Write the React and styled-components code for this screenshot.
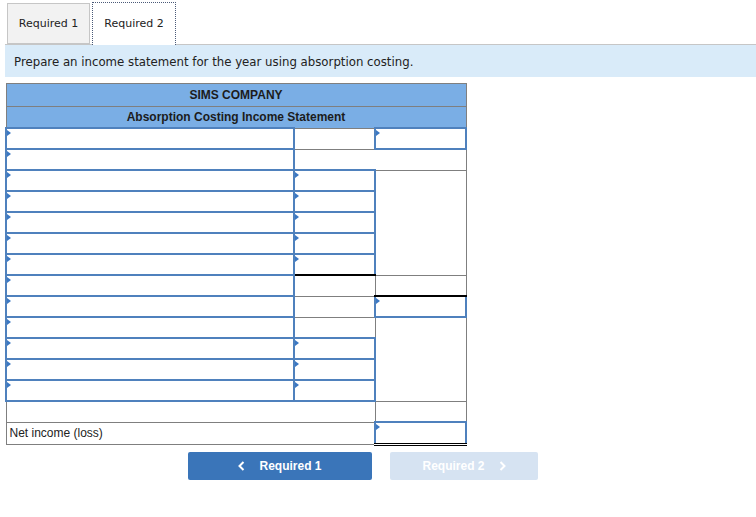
import React from 'react';
import styled, { createGlobalStyle } from 'styled-components';

const GlobalStyle = createGlobalStyle`
  html, body {
    margin: 0;
    padding: 0;
    background: #fff;
  }
  body {
    font-family: "DejaVu Sans", Verdana, sans-serif;
  }
`;

const Page = styled.div`
  padding: 3px 0 0 5px;
  width: 751px;
`;

const TabBar = styled.div`
  display: flex;
  align-items: flex-end;
  gap: 2px;
  padding-left: 2px;
  border-bottom: 1px solid #c6c6c6;
  height: 41px;
`;

const Tab = styled.button`
  box-sizing: border-box;
  font-family: "DejaVu Sans", Verdana, sans-serif;
  font-size: 11px;
  color: #222;
  cursor: pointer;
  width: ${({ $active }) => ($active ? '84px' : '83px')};
  height: ${({ $active }) => ($active ? '43px' : '41px')};
  margin-bottom: ${({ $active }) => ($active ? '-1px' : '0')};
  background: ${({ $active }) => ($active ? '#fff' : '#f2f2f2')};
  border: 1px ${({ $active }) => ($active ? 'dotted #4a5a78' : 'solid #c6c6c6')};
  border-bottom: ${({ $active }) => ($active ? 'none' : '1px solid #c6c6c6')};
  padding: ${({ $active }) => ($active ? '0 0 2px' : '0')};
`;

const Instruction = styled.div`
  background: #d9ebf9;
  height: 32px;
  display: flex;
  align-items: center;
  padding: 2px 0 0 9px;
  box-sizing: border-box;
  font-size: 11.75px;
  color: #222;
`;

const Sheet = styled.table`
  margin-top: 6px;
  border-collapse: collapse;
  width: 460px;
  table-layout: fixed;
  font-family: "Liberation Sans", Arial, sans-serif;
  font-size: 12px;
  color: #222;
`;

const HeadCell = styled.th`
  background: #7aaee5;
  border: 1px solid #7f7f7f;
  height: ${({ $tall }) => ($tall ? '22px' : '20px')};
  padding: 0;
  font-weight: bold;
  font-size: 12px;
  text-align: center;
  color: #1c1c1c;
`;

const Cell = styled.td`
  position: relative;
  box-sizing: border-box;
  height: 21px;
  padding: 0;
  border: 1px solid #7f7f7f;
  ${({ $input }) => $input && `
    border: 2px solid #4f81bd;
    &::before {
      content: '';
      position: absolute;
      top: 1px;
      left: 0;
      border-left: 4px solid #3b78c3;
      border-top: 3px solid transparent;
      border-bottom: 3px solid transparent;
    }
  `}
  ${({ $total }) => $total === 'single' && 'border-bottom: 2px solid #000;'}
  ${({ $total }) => $total === 'double' && 'border-bottom: 3px double #000;'}
`;

const Field = styled.input`
  display: block;
  box-sizing: border-box;
  width: 100%;
  height: 100%;
  border: none;
  background: transparent;
  outline: none;
  padding: 0 4px;
  font: inherit;
`;

const Label = styled.span`
  padding-left: 3px;
  line-height: 21px;
`;

const NavRow = styled.div`
  display: flex;
  gap: 18px;
  padding: 6px 0 0 183px;
`;

const NavButton = styled.button`
  display: flex;
  align-items: center;
  justify-content: center;
  gap: 14px;
  height: 28px;
  width: ${({ $w }) => $w}px;
  border: none;
  border-radius: 2px;
  background: ${({ $disabled }) => ($disabled ? '#d6e3f2' : '#3a75b9')};
  color: #fff;
  font-family: "Liberation Sans", Arial, sans-serif;
  font-weight: bold;
  font-size: 12px;
  cursor: ${({ $disabled }) => ($disabled ? 'default' : 'pointer')};
  padding: 0;
`;

const Chevron = ({ dir }) => (
  <svg width="7" height="10" viewBox="0 0 7 10">
    <polyline
      points={dir === 'left' ? '5.5,1 1.5,5 5.5,9' : '1.5,1 5.5,5 1.5,9'}
      fill="none"
      stroke="#fff"
      strokeWidth="2"
    />
  </svg>
);

// one entry per body row: i = input cell, b = blank cell
const rows = [
  [{ i: 1 }, {}, { i: 1 }],
  [{ i: 1 }, { span: 2 }],
  [{ i: 1 }, { i: 1 }, { rows: 5 }],
  [{ i: 1 }, { i: 1 }],
  [{ i: 1 }, { i: 1 }],
  [{ i: 1 }, { i: 1 }],
  [{ i: 1 }, { i: 1, total: 'single' }],
  [{ i: 1 }, {}, { total: 'single' }],
  [{ i: 1 }, {}, { i: 1 }],
  [{ i: 1 }, {}, { rows: 4 }],
  [{ i: 1 }, { i: 1 }],
  [{ i: 1 }, { i: 1 }],
  [{ i: 1 }, { i: 1 }],
  [{ span: 2 }, {}],
  [{ span: 2, text: 'Net income (loss)' }, { i: 1, total: 'double' }],
];

export default function App() {
  return (
    <>
      <GlobalStyle />
      <Page>
        <TabBar>
          <Tab>Required 1</Tab>
          <Tab $active>Required 2</Tab>
        </TabBar>
        <Instruction>Prepare an income statement for the year using absorption costing.</Instruction>

        <Sheet>
          <colgroup>
            <col style={{ width: 288 }} />
            <col style={{ width: 81 }} />
            <col style={{ width: 91 }} />
          </colgroup>
          <thead>
            <tr>
              <HeadCell colSpan={3} $tall>SIMS COMPANY</HeadCell>
            </tr>
            <tr>
              <HeadCell colSpan={3}>Absorption Costing Income Statement</HeadCell>
            </tr>
          </thead>
          <tbody>
            {rows.map((row, r) => (
              <tr key={r}>
                {row.map((c, k) => (
                  <Cell
                    key={k}
                    colSpan={c.span || 1}
                    rowSpan={c.rows || 1}
                    $input={!!c.i}
                    $total={c.total}
                  >
                    {c.i ? <Field type="text" /> : c.text ? <Label>{c.text}</Label> : null}
                  </Cell>
                ))}
              </tr>
            ))}
          </tbody>
        </Sheet>

        <NavRow>
          <NavButton $w={184}>
            <Chevron dir="left" />
            Required 1
          </NavButton>
          <NavButton $w={148} $disabled>
            Required 2
            <Chevron dir="right" />
          </NavButton>
        </NavRow>
      </Page>
    </>
  );
}
